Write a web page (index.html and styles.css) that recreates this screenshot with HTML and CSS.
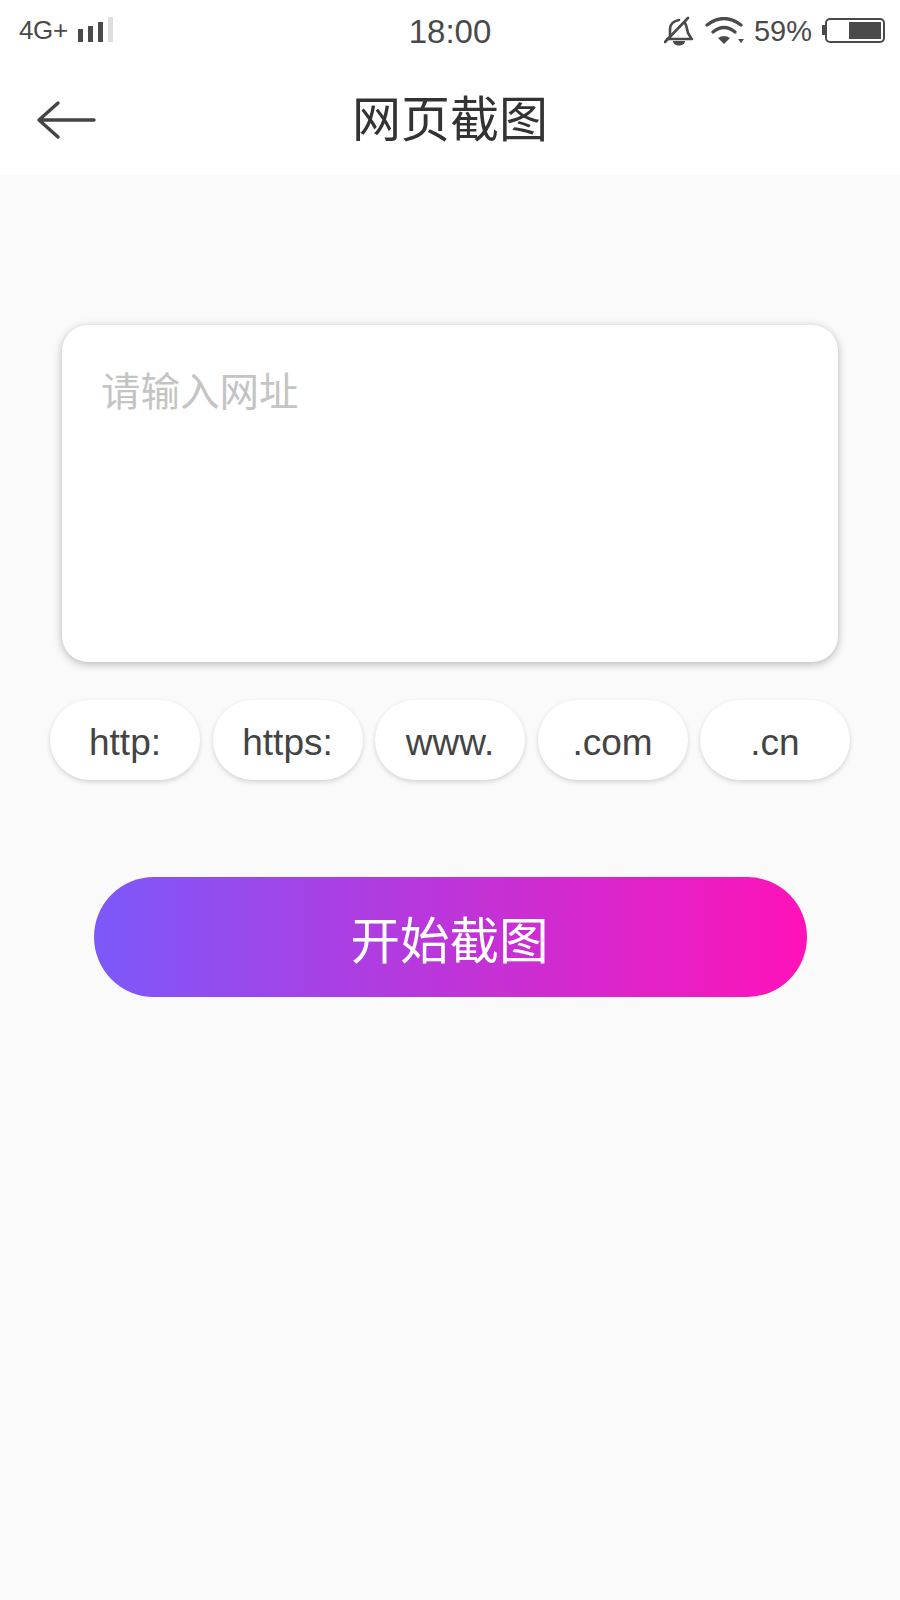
FILE: index.html
```html
<!DOCTYPE html>
<html lang="zh-CN">
<head>
    <meta charset="UTF-8">
    <meta name="viewport" content="width=device-width, initial-scale=1.0">
    <title>网页截图</title>
    <link rel="stylesheet" href="styles.css">
</head>
<body>
    <div class="top">
        <div class="status">
            <div class="status-left">
                <span class="net">4G+</span>
                <svg class="signal" width="36" height="26" viewBox="0 0 36 26">
                    <rect x="0" y="12" width="5" height="13" fill="#4a4a4a"/>
                    <rect x="10" y="9" width="5" height="16" fill="#4a4a4a"/>
                    <rect x="20" y="5" width="5" height="20" fill="#4a4a4a"/>
                    <rect x="30" y="0" width="5" height="25" fill="#dedede"/>
                </svg>
            </div>
            <div class="clock">18:00</div>
            <div class="status-right">
                <svg class="bell" width="30" height="30" viewBox="0 0 30 30">
                    <path d="M6 21v-8C6 8 10 5 15 4M21 7c2 3 2 7 3 10l3 5M3 23h25" fill="none" stroke="#4a4a4a" stroke-width="2.600" stroke-linecap="round"/>
                    <path d="M9 25h12c0 3-3 4.500-6 4.500s-6-1.500-6-4.500z" fill="#4a4a4a"/>
                    <path d="M1 26L24 2" stroke="#4a4a4a" stroke-width="2.600" stroke-linecap="round"/>
                </svg>
                <svg class="wifi" width="40" height="28" viewBox="0 0 40 28">
                    <path d="M2 8Q19-5 36 8M8 15q11-9 22 0" fill="none" stroke="#4a4a4a" stroke-width="3.200" stroke-linecap="round"/>
                    <path d="M13 21q6-4 12 0l-6 6z" fill="#4a4a4a"/>
                    <path d="M33 22h6l-3 4z" fill="#4a4a4a"/>
                </svg>
                <span class="percent">59%</span>
                <div class="battery-wrap">
                    <span class="battery-cap"></span>
                    <div class="battery"><span class="battery-level"></span></div>
                </div>
            </div>
        </div>
        <div class="header">
            <svg class="back" width="62" height="40" viewBox="0 0 62 40">
                <path d="M58 20H3M22 3L3 20l19 17" fill="none" stroke="#444" stroke-width="3.400" stroke-linecap="round" stroke-linejoin="round"/>
            </svg>
            <h1>网页截图</h1>
        </div>
    </div>

    <div class="content">
        <div class="url-box">
            <div class="placeholder">请输入网址</div>
        </div>
        <div class="chips">
            <div class="chip">http:</div>
            <div class="chip">https:</div>
            <div class="chip">www.</div>
            <div class="chip">.com</div>
            <div class="chip">.cn</div>
        </div>
        <button type="button" class="start">开始截图</button>
    </div>
</body>
</html>
```

FILE: styles.css
```css
* {
    box-sizing: border-box;
}
body {
    margin: 0;
    height: 1600px;
    background: #fafafa;
    font-family: "Liberation Sans", "Noto Sans CJK SC", sans-serif;
    color: #333;
}
.top {
    background: #fff;
    height: 175px;
}
.status {
    height: 60px;
    padding: 0 15px 0 19px;
    display: flex;
    align-items: center;
    justify-content: space-between;
    position: relative;
    color: #4a4a4a;
}
.status-left {
    display: flex;
    align-items: center;
    gap: 10px;
}
.net {
    font-size: 26px;
    letter-spacing: -0.4px;
}
.clock {
    position: absolute;
    left: 0;
    right: 0;
    top: 13px;
    text-align: center;
    font-size: 33px;
    pointer-events: none;
}
.status-right {
    display: flex;
    align-items: center;
}
.bell {
    margin: 2px 11px 0 0;
}
.wifi {
    margin: 2px 9px 0 0;
}
.percent {
    font-size: 29px;
    margin: 2px 10px 0 0;
}
.battery-wrap {
    display: flex;
    align-items: center;
}
.battery-cap {
    width: 3px;
    height: 10px;
    background: #4a4a4a;
}
.battery {
    width: 60px;
    height: 25px;
    border: 2px solid #4a4a4a;
    border-radius: 5px;
    padding: 2px;
    display: flex;
    justify-content: flex-end;
}
.battery-level {
    width: 32px;
    background: #4a4a4a;
}
.header {
    height: 115px;
    padding-bottom: 4px;
    display: flex;
    align-items: center;
    justify-content: center;
    position: relative;
}
.back {
    position: absolute;
    left: 36px;
    top: 40px;
}
h1 {
    margin: 0;
    font-size: 49px;
    font-weight: 400;
}
.content {
    padding: 150px 50px 0;
    display: flex;
    flex-direction: column;
}
.url-box {
    margin: 0 12px;
    height: 337px;
    background: #fff;
    border-radius: 26px;
    box-shadow: 0 2px 8px rgba(0, 0, 0, 0.28);
    padding: 42px 39px;
}
.placeholder {
    font-size: 39.5px;
    line-height: 50px;
    color: #c4c4c4;
}
.chips {
    margin-top: 38px;
    display: flex;
    justify-content: space-between;
}
.chip {
    width: 150px;
    height: 80px;
    padding-top: 5px;
    background: #fff;
    border-radius: 40px;
    box-shadow: 0 2px 5px rgba(0, 0, 0, 0.16);
    display: flex;
    align-items: center;
    justify-content: center;
    font-size: 37px;
    color: #444;
}
.start {
    margin: 97px 43px 0 44px;
    height: 120px;
    padding: 0 8px 0 6px;
    border: none;
    border-radius: 60px;
    background: linear-gradient(to right, #7c58fa, #ff12b8);
    color: #fff;
    font-family: inherit;
    font-size: 49.5px;
}
```
